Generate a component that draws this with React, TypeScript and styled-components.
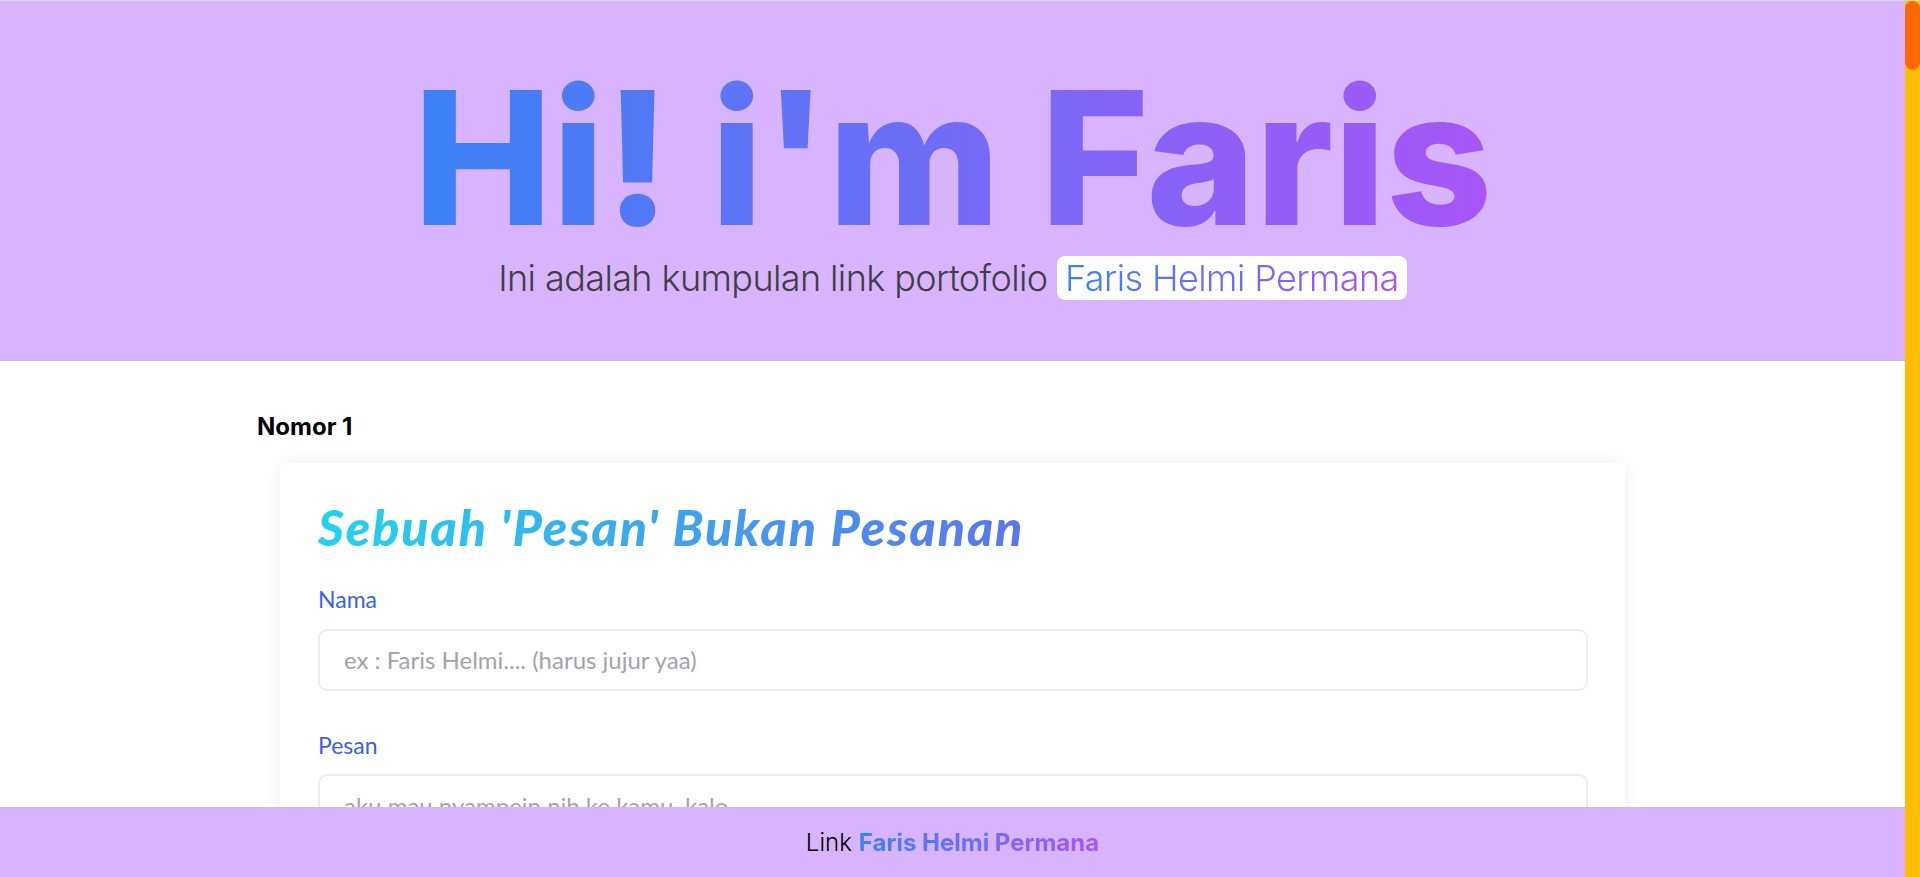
import React from "react";
import styled, { createGlobalStyle } from "styled-components";

const GlobalStyle = createGlobalStyle`
  html, body {
    margin: 0;
    padding: 0;
    height: 100%;
    overflow: hidden;
  }
  body {
    font-family: Inter, "Noto Sans", sans-serif;
    background: #ffffff;
    color: #000;
  }
  * { box-sizing: border-box; }
`;

const Shell = styled.div`
  display: flex;
  height: 100vh;
  border-top: 1px solid #d3d6da;
`;

const Viewport = styled.div`
  flex: 1;
  min-width: 0;
  display: flex;
  flex-direction: column;
`;

const Scroller = styled.div`
  flex: 1;
  overflow-y: auto;
  scrollbar-width: none;
  &::-webkit-scrollbar { display: none; }
`;

const ScrollTrack = styled.div`
  width: 15px;
  flex: 0 0 15px;
  background: #ffbf00;
`;

const ScrollThumb = styled.div`
  height: 69px;
  border-radius: 8px;
  background: #ff6a00;
`;

const Hero = styled.header`
  height: 360px;
  background: #d8b4fe;
  display: flex;
  flex-direction: column;
  align-items: center;
  justify-content: center;
  gap: 7px;
`;

const Title = styled.h1`
  display: inline-block;
  margin: 0;
  font-family: Inter, sans-serif;
  font-weight: 800;
  font-size: 186px;
  line-height: 1;
  letter-spacing: -0.5px;
  background: linear-gradient(to right, #3b82f6, #a855f7);
  -webkit-background-clip: text;
  background-clip: text;
  color: transparent;
`;

const Subtitle = styled.p`
  margin: 0;
  font-family: Inter, sans-serif;
  font-weight: 300;
  font-size: 36px;
  line-height: 40px;
  letter-spacing: -0.6px;
  color: #3f3f46;
`;

const NameChip = styled.span`
  background: #ffffff;
  border-radius: 8px;
  padding: 0 8px;
`;

const GradientText = styled.span<{ $from: string; $to: string }>`
  background: linear-gradient(to right, ${(p) => p.$from}, ${(p) => p.$to});
  -webkit-background-clip: text;
  background-clip: text;
  color: transparent;
`;

const Main = styled.main`
  max-width: 1391px;
  margin: 0 auto;
  padding: 50px 0 120px;
`;

const SectionTitle = styled.h2`
  margin: 0 0 20px;
  font-family: Inter, sans-serif;
  font-weight: 700;
  font-size: 24px;
  line-height: 32px;
  color: #000;
`;

const Card = styled.section`
  margin: 0 23px;
  background: #fff;
  border-radius: 6px;
  box-shadow: 0 0 16px rgba(0, 0, 0, 0.07);
  padding: 34px 37px 40px 38px;
  font-family: Lato, "Open Sans", sans-serif;
`;

const CardTitle = styled.h3`
  display: inline-block;
  margin: 0 0 29px;
  font-family: Lato, sans-serif;
  font-style: italic;
  font-weight: 900;
  font-size: 50px;
  line-height: 1.2;
  letter-spacing: 1.9px;
  background: linear-gradient(to right, #22d3ee, #5a76ea);
  -webkit-background-clip: text;
  background-clip: text;
  color: transparent;
`;

const Field = styled.div`
  display: flex;
  flex-direction: column;
  gap: 15px;
  margin-bottom: 41px;
`;

const Label = styled.label`
  font-family: Lato, sans-serif;
  font-size: 23px;
  line-height: 1.2;
  color: #3b5fe6;
`;

const inputBase = `
  width: 100%;
  border: 2px solid #ececf2;
  border-radius: 9px;
  background: #fff;
  font-family: Lato, sans-serif;
  font-size: 24px;
  line-height: 28px;
  color: #333;
  outline: none;
  &::placeholder { color: #a3a3ad; }
`;

const TextInput = styled.input`
  ${inputBase}
  height: 62px;
  padding: 0 24px;
`;

const TextArea = styled.textarea`
  ${inputBase}
  display: block;
  height: 200px;
  padding: 16px 24px;
  resize: none;
`;

const SendButton = styled.button`
  border: none;
  border-radius: 9px;
  padding: 14px 32px;
  font-family: Lato, sans-serif;
  font-weight: 700;
  font-size: 20px;
  color: #fff;
  background: linear-gradient(to right, #22d3ee, #5b74ee);
`;

const Footer = styled.footer`
  flex: 0 0 70px;
  height: 70px;
  background: #d8b4fe;
  display: flex;
  align-items: center;
  justify-content: center;
  font-family: Inter, sans-serif;
  font-size: 24px;
  color: #000;
`;

const FooterLight = styled.span`
  font-weight: 300;
  margin-right: 7px;
`;

const FooterBold = styled(GradientText)`
  font-weight: 700;
`;

export default function App() {
  return (
    <Shell>
      <GlobalStyle />
      <Viewport>
        <Scroller>
          <Hero>
            <Title>Hi! i'm Faris</Title>
            <Subtitle>
              Ini adalah kumpulan link portofolio{" "}
              <NameChip>
                <GradientText $from="#3b82f6" $to="#a855f7">
                  Faris Helmi Permana
                </GradientText>
              </NameChip>
            </Subtitle>
          </Hero>
          <Main>
            <SectionTitle>Nomor 1</SectionTitle>
            <Card>
              <CardTitle>Sebuah 'Pesan' Bukan Pesanan</CardTitle>
              <Field>
                <Label htmlFor="nama">Nama</Label>
                <TextInput id="nama" placeholder="ex : Faris Helmi.... (harus jujur yaa)" />
              </Field>
              <Field>
                <Label htmlFor="pesan">Pesan</Label>
                <TextArea id="pesan" placeholder="aku mau nyampein nih ke kamu, kalo..." />
              </Field>
              <SendButton type="button">Kirim</SendButton>
            </Card>
          </Main>
        </Scroller>
        <Footer>
          <FooterLight>Link</FooterLight>
          <FooterBold $from="#3b82f6" $to="#a855f7">Faris Helmi Permana</FooterBold>
        </Footer>
      </Viewport>
      <ScrollTrack>
        <ScrollThumb />
      </ScrollTrack>
    </Shell>
  );
}
